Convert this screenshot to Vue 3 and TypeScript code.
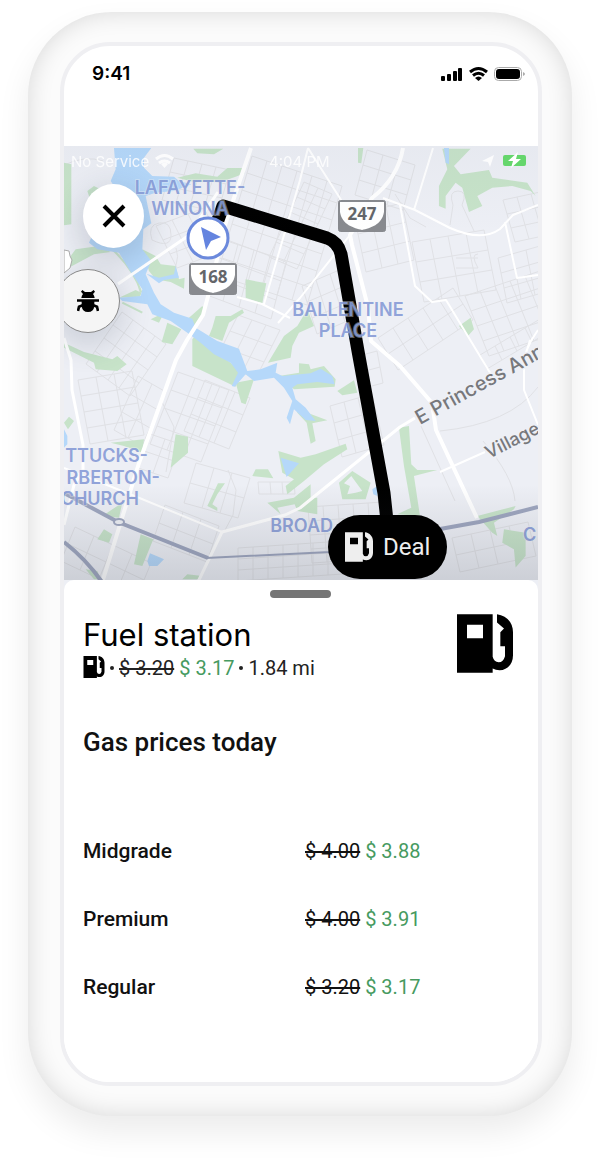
<script setup lang="ts">
interface Grade {
  name: string
  was: string
  now: string
}

interface Label {
  text: string
  x: number
  y: number
  anchor: 'start' | 'middle' | 'end'
}

type Block = [number, number, number, number, number, number, number, number]

const grades: Grade[] = [
  { name: 'Midgrade', was: '$ 4.00', now: '$ 3.88' },
  { name: 'Premium', was: '$ 4.00', now: '$ 3.91' },
  { name: 'Regular', was: '$ 3.20', now: '$ 3.17' },
]

const pump =
  'M0 0H107V128Q111 144 125 144T144 126V96H130V54L141 43L120 25V0C148 4 168 24 168 54V123C168 150 150 168 128 168Q116 168 107 163V176H0ZM30 32V72H78V32Z'

const districts: Label[] = [
  { text: 'LAFAYETTE-', x: 190, y: 194, anchor: 'middle' },
  { text: 'WINONA', x: 190, y: 215, anchor: 'middle' },
  { text: 'BALLENTINE', x: 348, y: 316, anchor: 'middle' },
  { text: 'PLACE', x: 348, y: 337, anchor: 'middle' },
  { text: 'TTUCKS-', x: 148, y: 462, anchor: 'end' },
  { text: 'RBERTON-', x: 160, y: 484, anchor: 'end' },
  { text: 'CHURCH', x: 139, y: 505, anchor: 'end' },
  { text: 'BROAD', x: 333, y: 532, anchor: 'end' },
  { text: 'C', x: 523, y: 541, anchor: 'start' },
]

// Each block of streets: origin, along vector, across vector, and counts of each.
const blocks: Block[] = [
  [174, 158, 14, 3, -4, 14, 4, 3],
  [252, 156, 15, 5, -5, 17, 6, 7],
  [222, 238, 16, 6, -5, 19, 4, 3],
  [156, 226, 16, -6, 7, 14, 3, 3],
  [122, 312, 11, 8, -9, 13, 4, 4],
  [238, 315, 14, 5, -8, 16, 3, 3],
  [78, 380, 18, -3, 3, 16, 3, 4],
  [138, 376, 14, 8, -8, 18, 2, 3],
  [178, 372, 17, 6, -7, 18, 3, 4],
  [205, 380, 15, 6, -7, 17, 3, 3],
  [150, 434, 15, 5, -6, 17, 2, 2],
  [196, 463, 18, 5, -6, 20, 3, 2],
  [165, 505, 18, 7, -6, 18, 3, 2],
  [75, 527, 19, 9, -7, 17, 4, 2],
  [238, 548, 15, -1, 0, 11, 7, 3],
  [258, 482, 12, 0, 1, 12, 3, 1],
  [308, 507, 15, -1, 1, 14, 5, 4],
  [367, 150, 16, 5, -4, 15, 3, 3],
  [304, 182, 14, 6, -7, 15, 2, 5],
  [354, 215, 16, -4, 4, 19, 3, 3],
  [302, 286, 14, -6, 5, 16, 3, 3],
  [412, 242, 18, -3, 4, 20, 4, 3],
  [498, 258, 14, -4, 3, 15, 3, 3],
  [503, 200, 14, -3, 4, 14, 3, 3],
  [465, 296, 15, -5, 6, 15, 5, 4],
  [378, 338, 15, -10, 10, 16, 5, 2],
  [330, 406, 14, -4, 4, 17, 3, 3],
  [362, 355, 15, -4, 3, 16, 1, 2],
  [452, 538, 19, -4, 4, 17, 4, 2],
  [480, 355, 15, -9, 7, 14, 4, 1],
]

function streets([x, y, ux, uy, vx, vy, nu, nv]: Block): string {
  let d = ''
  for (let i = 0; i <= nu; i++) {
    d += `M${x + i * ux} ${y + i * uy}l${nv * vx} ${nv * vy}`
  }
  for (let j = 0; j <= nv; j++) {
    d += `M${x + j * vx} ${y + j * vy}l${nu * ux} ${nu * uy}`
  }
  return d
}
</script>

<template>
  <main class="stage">
    <div class="phone">
      <div class="screen">
        <header class="status">
          <time>9:41</time>
          <svg class="status-icons" viewBox="0 0 86 16" aria-hidden="true">
            <rect x="1" y="10" width="4" height="5" rx="1" />
            <rect x="7" y="8" width="4" height="7" rx="1" />
            <rect x="13" y="5" width="4" height="10" rx="1" />
            <rect x="18" y="2" width="4" height="13" rx="1" />
            <path class="arc" d="M30 6Q38.500 -1 47 6M33 9.500Q38.500 5 44 9.500" />
            <path d="M35 12Q38.500 9 42 12L38.500 15Z" />
            <rect class="case" x="54.500" y="1.500" width="27" height="13" rx="4" />
            <rect x="56" y="3" width="24" height="10" rx="3" />
            <path class="tip" d="M83 6Q87 8 83 10Z" />
          </svg>
        </header>

        <section class="map-area" aria-label="Map">
          <svg class="map" viewBox="64 146 474 444" preserveAspectRatio="xMidYMin slice">
            <defs>
              <linearGradient id="fade" x1="0" y1="0" x2="0" y2="1">
                <stop offset="0" stop-color="#53607a" stop-opacity="0.04" />
                <stop offset="0.200" stop-color="#53607a" stop-opacity="0" />
                <stop offset="0.780" stop-color="#39404d" stop-opacity="0" />
                <stop offset="1" stop-color="#39404d" stop-opacity="0.180" />
              </linearGradient>
              <filter id="soft" x="-60%" y="-60%" width="220%" height="220%">
                <feGaussianBlur stdDeviation="14" />
              </filter>
            </defs>

            <rect class="land" x="64" y="146" width="474" height="444" />
            <path v-for="(block, i) in blocks" :key="i" class="street" :d="streets(block)" />
            <path
              class="street"
              d="M64 165Q85 155 103 161M110 249Q137 262 140 295M152 240q-5-15 7-17t12 12-19 5M165 280Q182 265 176 248M450 225l3-20q-5-14 5-14t4 14l12 26M395 194l15 24 16 9M456 258h22M456 268h22q-8-14 0-14M440 431q70-7 98-44M421 426l34 75M483 441q30 35 32 60M225 360q-10 14 7 24M228 470l8 20-3 25-9 17M162 402l12 25-8 45"
            />

            <g transform="translate(64 146) scale(0.3333)">
              <g class="park">
                <path d="M0 50L22 55V235L0 238ZM388 8H478L450 25L400 22ZM340 95L395 82L460 92L490 66H535L542 82L515 92L470 108L390 108ZM882 6H898L892 52L882 50Z" />
                <path d="M20 330L35 310L105 300L140 318L90 325L20 362ZM235 310L275 330L290 355L335 360L345 400L362 395L360 428L320 408L275 400L255 375ZM545 400L607 412L595 472L545 455ZM165 455L215 432L232 440L228 452Z" />
                <path d="M370 520L415 480L422 492L398 545ZM310 530L352 550L325 595L293 588ZM455 510L500 510L535 490L540 500L495 530L475 585L435 570L445 545ZM260 520L300 500L285 530Z" />
                <path d="M385 580V660L515 722L530 675L450 610L400 560ZM730 490L700 540L660 570L612 650L680 635L685 600L705 560L750 540ZM515 710L570 700L545 775L532 770Z" />
                <path d="M645 690L705 680L705 652L735 655L740 670L780 660L815 700L812 722L690 730ZM820 735L870 703L880 740L835 748ZM700 765L730 800L790 823L745 832L755 885L740 893L728 830L700 800Z" />
                <path d="M0 590L60 618L145 640L160 630L188 655L160 675L95 670L90 650L0 605ZM0 830L15 812L30 825L12 850ZM140 890L240 880L235 920L180 900ZM335 865L372 872V920L320 965ZM115 1110L175 1070L165 1115ZM100 1180L120 1150L145 1165L135 1190ZM230 1165L268 1180L235 1260L210 1255ZM65 1270L100 1275L110 1300H90ZM355 1300L370 1285L415 1290L400 1300Z" />
                <path d="M565 990L575 970H612L628 997ZM462 1012H483L460 1045L445 1075L460 1085V1095L430 1080ZM643 915L710 935L755 925L845 893L850 910L780 955L720 1005L670 1045L665 1020L690 1000L655 980ZM610 1070L690 1055L740 1015V1055H760V1105L700 1095L692 1075L640 1085L650 1105Z" />
                <path fill-rule="evenodd" d="M835 1060L825 1010L865 975L920 1010L905 1060ZM840 1012L862 990L895 1035L875 1040L850 1045L858 1020Z" />
                <path d="M1005 845L1035 840L1042 955L1060 972H1120L1070 985L1050 990L1068 1110L1000 1105L1042 1085L1020 960ZM1240 1110L1355 1080L1350 1090L1290 1130L1300 1170L1285 1160ZM1320 1150L1385 1160V1230L1355 1265L1350 1210L1315 1190ZM1185 540L1220 515L1230 550L1212 570Z" />
                <path d="M1135 8H1220L1170 60L1190 85L1275 72L1285 95L1390 110L1415 150L1400 135L1345 120L1285 125L1240 150L1255 180L1215 198L1195 125L1175 110L1145 150V188L1125 180V120L1150 70ZM70 135L90 120L120 135L80 165Z" />
              </g>
              <path class="park-line" d="M140 305Q210 370 232 440M175 470L235 500" />
              <g class="water">
                <path d="M150 6H262L240 35L240 65L265 90L330 92L345 105L382 115L330 135L275 140L245 150L262 232L238 250L235 310L262 345L245 385L270 440L290 475L330 500L385 518L395 545L460 585L525 608L550 675L590 670L640 650L635 680L655 690L740 682L770 668L805 690L812 715L760 708L700 715L685 725L695 760L725 785L755 825L725 822L690 790L678 835L668 815L685 765L660 725L630 695L570 705L545 685L512 722L503 720L522 680L500 650L450 625L410 590L370 560L320 525L265 505L250 475L175 465L165 455L230 450L235 430L215 400L195 370L165 320L100 310L75 290L150 120L140 105L155 70Z" />
                <path d="M247 383L285 395L330 385L335 360L345 395L300 402L285 412ZM650 935L705 952L668 993ZM250 1245L258 1222L290 1235L300 1240L280 1260H255ZM925 1030L940 1020V1050L928 1045ZM1140 6H1155V55L1145 50ZM0 850L10 870V895L0 905Z" />
              </g>
            </g>

            <g class="road thin">
              <path d="M237 297l25 7 28 14M264 304l36-124 8-32M383 198l32 12 35 18Q482 242 500 229L513 215 538 205M433 148l-19 62M400 205l15 81 17 16 14-2 46 76M350 235l-50 63-22 25M505 222l12 56 21-3M308 148l35 55M440 472l45-20M530 340l-6 20v30l14 35M64 468l73 29 85 35M538 330q-15 20-15 40" />
            </g>
            <g class="road">
              <path d="M415 418l-15 9-100 81-15 7-63 17-25 52M118 284l70-48 30-44M64 338l7 22 1 30 11 55v25l-9 15-10 40" />
            </g>
            <g class="road wide">
              <path d="M251 148l-12 35-14 42-14 60-8 30-16 25-11 20-37 103-37 120M403 148q-5 30-31 50l-22 37 2 10 16 62 3 34 29 25 32 37 4 27 41 88" />
            </g>

            <path class="highway" d="M64 493l54 29 90 36M429 531l50-9 59-15M64 542q22 17 38 40" />
            <path class="highway narrow" d="M206 558l124-6 99-21" />
            <ellipse class="junction" cx="119" cy="522" rx="5" ry="3" />

            <g class="haze" filter="url(#soft)">
              <circle cx="113" cy="226" r="38" />
              <circle cx="88" cy="311" r="38" />
            </g>

            <path class="route" d="M218 220l5-14 104 32q11 4 14 16l17 97 26 142 3 28" />

            <text
              v-for="label in districts"
              :key="label.text"
              class="district"
              :x="label.x"
              :y="label.y"
              :text-anchor="label.anchor"
            >{{ label.text }}</text>
            <text class="avenue" x="420" y="425" transform="rotate(-29 420 425)">E Princess Ann</text>
            <text class="avenue small" x="489" y="459" transform="rotate(-27 489 459)">Village</text>

            <g class="shield" transform="translate(189 263)">
              <rect x="0.500" y="0.500" width="47" height="31" rx="2" />
              <path d="M2 2H46V12C44 25 32 28 24 30C16 28 4 25 2 12Z" />
              <text x="24" y="20" text-anchor="middle">168</text>
            </g>
            <g class="shield" transform="translate(338 200)">
              <rect x="0.500" y="0.500" width="47" height="31" rx="2" />
              <path d="M2 2H46V12C44 25 32 28 24 30C16 28 4 25 2 12Z" />
              <text x="24" y="20" text-anchor="middle">247</text>
            </g>
            <path class="side-sign" d="M64 250l5 1 1 5 2 4-2 8-6 5z" />

            <circle class="position" cx="208" cy="238" r="20" />
            <path class="pointer" d="M201 227L221 237L211 241L206 250Z" />

            <rect x="64" y="146" width="474" height="434" fill="url(#fade)" />

            <g class="capture">
              <text x="71" y="167">No Service</text>
              <text x="269" y="167">4:04 PM</text>
              <path class="wave" d="M156 159q8.500-7 17 0M159 163q5.500-4 11 0" />
              <path d="M161 164q4-3 7 0l-3.500 4z" />
              <path d="M482 161l12-6-4 12-2-5z" />
            </g>
            <rect class="charge" x="503" y="155" width="23" height="11" rx="2" />
            <path class="bolt" d="M518 152l-10 9h5l-2 7 10-9h-5z" />
          </svg>

          <button class="round close" type="button" aria-label="Close">
            <svg viewBox="0 0 24 24" aria-hidden="true"><path d="M2 2L22 22M22 2L2 22" /></svg>
          </button>
          <button class="round debug" type="button" aria-label="Report a bug">
            <svg viewBox="0 0 66 66" aria-hidden="true">
              <path d="M16 0L24 6H42L50 0L54 5L48 12Q52 17 53 24H13Q14 17 18 12L12 5ZM0 28H66V35H52V48Q50 66 33 66T14 48V35H0Z" />
              <path class="leg" d="M17 46L6 50L3 63M49 46L60 50L63 63" />
            </svg>
          </button>
          <button class="deal" type="button">
            <svg viewBox="0 0 168 176" aria-hidden="true"><path fill-rule="evenodd" :d="pump" /></svg>
            Deal
          </button>
        </section>

        <section class="sheet">
          <div class="handle"></div>
          <div class="summary">
            <div>
              <h1>Fuel station</h1>
              <p class="facts">
                <svg viewBox="0 0 168 176" aria-hidden="true"><path fill-rule="evenodd" :d="pump" /></svg>
                <span class="dot"></span>
                <s>$ 3.20</s>
                <span class="now">$ 3.17</span>
                <span class="dot"></span>
                <span>1.84 mi</span>
              </p>
            </div>
            <svg class="pump" viewBox="0 0 168 176" aria-hidden="true"><path fill-rule="evenodd" :d="pump" /></svg>
          </div>
          <h2 id="prices">Gas prices today</h2>
          <table aria-labelledby="prices">
            <tbody>
              <tr v-for="grade in grades" :key="grade.name">
                <th scope="row">{{ grade.name }}</th>
                <td><s>{{ grade.was }}</s> <span class="now">{{ grade.now }}</span></td>
              </tr>
            </tbody>
          </table>
        </section>
      </div>
    </div>
  </main>
</template>

<style>
body {
  background: #fff;
}
</style>

<style scoped>
* {
  box-sizing: border-box;
}

.stage {
  padding: 12px 28px 44px;
  overflow: hidden;
  color: #000;
  font-family: Roboto, "Liberation Sans", sans-serif;
}

.phone {
  padding: 30px 30px 30px 32px;
  border-radius: 84px;
  background: #fbfbfb;
  box-shadow:
    inset 0 0 24px rgba(0, 0, 0, 0.14),
    0 16px 32px rgba(0, 0, 0, 0.08);
}

.screen {
  overflow: hidden;
  border: 4px solid #efeff2;
  border-radius: 50px;
  background: #fff;
}

.status {
  display: flex;
  align-items: flex-start;
  justify-content: space-between;
  height: 100px;
  padding: 16px 12px 0 28px;
}

.status time {
  font: 600 19px/24px Inter, sans-serif;
}

.status-icons {
  width: 86px;
  height: 16px;
  margin-top: 4px;
}

.status-icons .arc {
  fill: none;
  stroke: #000;
  stroke-width: 3;
}

.status-icons .case {
  fill: none;
  stroke: #aaa;
}

.status-icons .tip {
  fill: #aaa;
}

.map-area {
  position: relative;
  height: 444px;
  overflow: hidden;
}

.map {
  display: block;
  width: 100%;
  height: 100%;
}

.land {
  fill: #edeff5;
}

.street {
  fill: none;
  stroke: #e0e1e5;
}

.park {
  fill: #c7e3c9;
}

.park-line {
  fill: none;
  stroke: #c7e3c9;
  stroke-width: 6;
}

.water {
  fill: #b5d8fa;
}

.road {
  fill: none;
  stroke: #fff;
  stroke-width: 3;
  stroke-linejoin: round;
}

.road.thin {
  stroke-width: 2;
}

.road.wide {
  stroke-width: 4;
}

.highway {
  fill: none;
  stroke: #9ea6bf;
  stroke-width: 4;
}

.highway.narrow {
  stroke-width: 2;
}

.junction {
  fill: #eef0f5;
  stroke: #9ea6bf;
  stroke-width: 2;
}

.haze {
  fill: #38445c;
  opacity: 0.16;
}

.route {
  fill: none;
  stroke: #000;
  stroke-width: 13;
  stroke-linejoin: round;
}

.district {
  fill: #8499d6;
  fill-opacity: 0.9;
  stroke: #eef0f6;
  stroke-width: 2;
  stroke-opacity: 0.4;
  paint-order: stroke;
  font: 600 18px Inter, sans-serif;
}

.avenue {
  fill: #77787c;
  stroke: #eef0f6;
  stroke-width: 3;
  paint-order: stroke;
  font: 500 20px Inter, sans-serif;
}

.avenue.small {
  font-size: 18px;
}

.shield rect {
  fill: #888a8f;
  stroke: #888a8f;
}

.shield path {
  fill: #fff;
}

.shield text {
  fill: #64666a;
  font: 700 17px "Noto Sans", sans-serif;
}

.side-sign {
  fill: #fff;
  stroke: #aaa;
}

.position {
  fill: #fff;
  stroke: #6b89dc;
  stroke-width: 3;
}

.pointer {
  fill: #6484df;
}

.capture {
  fill: #fff;
  opacity: 0.85;
  font: 400 15px Inter, sans-serif;
}

.capture .wave {
  fill: none;
  stroke: #fff;
  stroke-width: 3;
}

.charge {
  fill: #65d66c;
}

.bolt {
  fill: #fff;
}

button {
  margin: 0;
  border: 0;
  color: inherit;
  font: inherit;
}

.round {
  position: absolute;
  display: flex;
  align-items: center;
  justify-content: center;
  padding: 0;
  border-radius: 50%;
}

.close {
  top: 38px;
  left: 19px;
  width: 61px;
  height: 64px;
  background: #fff;
}

.close svg {
  width: 24px;
  height: 24px;
  stroke: #000;
  stroke-width: 4;
}

.debug {
  top: 123px;
  left: -8px;
  width: 64px;
  height: 64px;
  border: 1px solid #888;
  background: #f5f5f5;
}

.debug svg {
  width: 22px;
  height: 22px;
}

.leg {
  fill: none;
  stroke: #000;
  stroke-width: 8;
}

.deal {
  position: absolute;
  top: 369px;
  left: 264px;
  display: flex;
  align-items: center;
  gap: 10px;
  height: 64px;
  padding: 0 17px;
  border-radius: 32px;
  background: #000;
  color: #eee;
  font-size: 24px;
}

.deal svg {
  width: 28px;
  height: 30px;
  fill: #eee;
}

.sheet {
  position: relative;
  height: 502px;
  margin-top: -10px;
  padding: 10px 20px 0 19px;
  border-radius: 10px 10px 0 0;
  background: #fff;
}

.handle {
  width: 61px;
  height: 8px;
  margin: 0 auto;
  border-radius: 4px;
  background: #757575;
}

.summary {
  display: flex;
  justify-content: space-between;
  padding: 16px 5px 0 0;
}

h1,
h2,
p {
  margin: 0;
}

h1 {
  padding-top: 1px;
  font: 400 31px/40px Inter, sans-serif;
}

.facts {
  display: flex;
  align-items: center;
  gap: 5px;
  color: #222;
  font-size: 20px;
  line-height: 26px;
}

.facts svg {
  width: 22px;
  height: 22px;
  margin-bottom: 3px;
}

.dot {
  width: 4px;
  height: 4px;
  border-radius: 50%;
  background: #222;
}

.now {
  color: #469a60;
}

.pump {
  width: 56px;
  height: 59px;
}

h2 {
  margin-top: 45px;
  color: #111;
  font-size: 26px;
  font-weight: 500;
  line-height: 32px;
}

table {
  width: 100%;
  margin-top: 59px;
  border-spacing: 0;
  color: #111;
  font-size: 21px;
  line-height: 28px;
}

th,
td {
  height: 68px;
  padding: 0;
  text-align: left;
}

th {
  width: 222px;
  font-weight: 500;
}

td {
  font-size: 20px;
}
</style>
